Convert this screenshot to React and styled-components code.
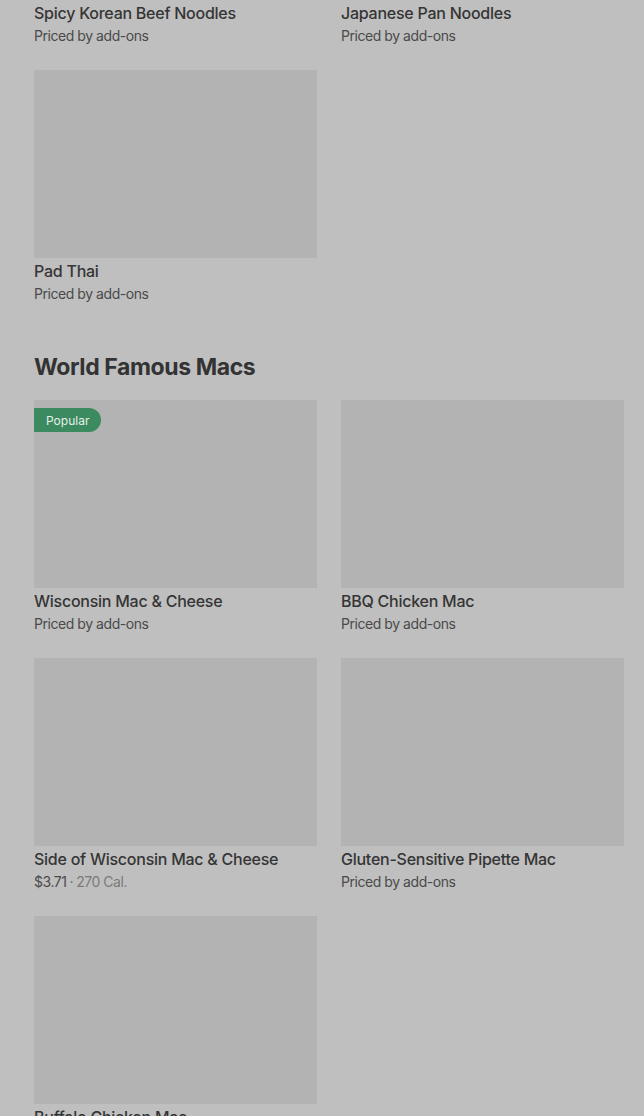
import React from 'react'
import styled, { createGlobalStyle } from 'styled-components'

const GlobalStyle = createGlobalStyle`
    html, body {
        margin: 0;
        padding: 0;
        background: #bfbfbf;
        overflow: hidden;
    }
    body {
        font-family: Inter, "Liberation Sans", Arial, sans-serif;
        color: #333333;
    }
`

const Page = styled.div`
    width: 644px;
    height: 1116px;
    overflow: hidden;
    background: #bfbfbf;
`
const Scroller = styled.div`
    margin-top: -188px;
    padding: 0 20px 0 34px;
`
const Section = styled.section`
    margin-bottom: 43px;
`
const SectionTitle = styled.h2`
    margin: 0 0 15px;
    font-size: 23px;
    line-height: 36px;
    font-weight: 700;
    letter-spacing: -0.4px;
    color: #333333;
`
const Grid = styled.div`
    display: grid;
    grid-template-columns: 283px 283px;
    column-gap: 24px;
    row-gap: 22px;
`
const Card = styled.div`
    display: flex;
    flex-direction: column;
`
const Thumb = styled.div`
    position: relative;
    height: 188px;
    background: #b3b3b3;
`
const Badge = styled.span`
    position: absolute;
    top: 8px;
    left: 0;
    height: 24px;
    padding: 0 12px;
    display: flex;
    align-items: center;
    background: #3b8a60;
    color: #e6efe9;
    font-size: 12px;
    border-radius: 0 12px 12px 0;
`
const Name = styled.div`
    margin-top: 2px;
    font-size: 16px;
    line-height: 22px;
    font-weight: 500;
    color: #353535;
    letter-spacing: -0.25px;
`
const Meta = styled.div`
    font-size: 14px;
    line-height: 24px;
    color: #4a4a4a;
    letter-spacing: -0.45px;
`
const Cal = styled.span`
    color: #7a7a7a;
`
const Dot = styled.span`
    margin: 0 3px;
    color: #6a6a6a;
`

const noodles = [
    { name: 'Spicy Korean Beef Noodles' },
    { name: 'Japanese Pan Noodles' },
    { name: 'Pad Thai' },
]

const macs = [
    { name: 'Wisconsin Mac & Cheese', popular: true },
    { name: 'BBQ Chicken Mac' },
    { name: 'Side of Wisconsin Mac & Cheese', price: '$3.71', cal: '270 Cal.' },
    { name: 'Gluten-Sensitive Pipette Mac' },
    { name: 'Buffalo Chicken Mac' },
]

function Item({ item }) {
    return (
        <Card>
            <Thumb>{item.popular && <Badge>Popular</Badge>}</Thumb>
            <Name>{item.name}</Name>
            <Meta>
                {item.price ? (
                    <>
                        {item.price}
                        <Dot>·</Dot>
                        <Cal>{item.cal}</Cal>
                    </>
                ) : (
                    'Priced by add-ons'
                )}
            </Meta>
        </Card>
    )
}

export default function App() {
    return (
        <Page>
            <GlobalStyle />
            <Scroller>
                <Section>
                    <Grid>
                        {noodles.map((item) => (
                            <Item key={item.name} item={item} />
                        ))}
                    </Grid>
                </Section>
                <Section>
                    <SectionTitle>World Famous Macs</SectionTitle>
                    <Grid>
                        {macs.map((item) => (
                            <Item key={item.name} item={item} />
                        ))}
                    </Grid>
                </Section>
            </Scroller>
        </Page>
    )
}
